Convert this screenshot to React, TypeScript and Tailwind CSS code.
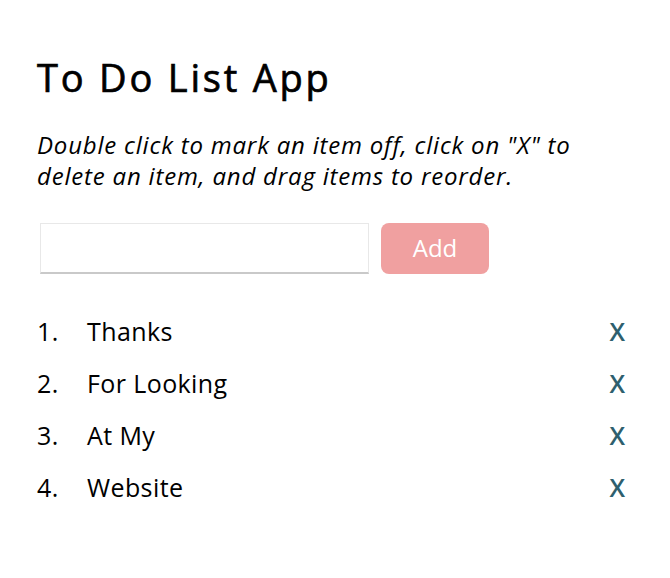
import { useState } from "react"

export default function App() {
  const [items, setItems] = useState(["Thanks", "For Looking", "At My", "Website"])
  const [text, setText] = useState("")

  const addItem = () => {
    if (!text.trim()) return
    setItems([...items, text.trim()])
    setText("")
  }

  return (
    <div className="min-h-screen bg-white px-[37px] pt-[55px] font-['Open_Sans',sans-serif] text-black">
      <h1 className="text-[38px] font-normal leading-[1.2] tracking-[2.8px] [-webkit-text-stroke:0.7px_black]">
        To Do List App
      </h1>
      <p className="mt-[28px] pr-[40px] text-[24px] italic leading-[31px] tracking-[0.8px]">
        Double click to mark an item off, click on "X" to delete an item, and drag items to reorder.
      </p>

      <div className="mt-[32px] ml-[3px] flex items-center gap-3">
        <input
          value={text}
          onChange={(e) => setText(e.target.value)}
          className="h-[51px] w-[329px] border border-[#e8e8e8] border-b-2 border-b-[#c9c9c9] px-3 text-[22px] outline-none"
        />
        <button
          onClick={addItem}
          className="h-[51px] w-[108px] rounded-lg bg-[#f0a0a0] text-[24px] text-white"
        >
          Add
        </button>
      </div>

      <ol className="mt-[32px]">
        {items.map((item, i) => (
          <li key={i} className="flex h-[52px] items-center text-[25px] tracking-[0.4px]">
            <span className="w-[50px]">{i + 1}.</span>
            <span className="flex-1">{item}</span>
            <button
              onClick={() => setItems(items.filter((_, j) => j !== i))}
              className="mr-[8px] font-semibold tracking-normal text-[#2e5f6e]"
            >
              X
            </button>
          </li>
        ))}
      </ol>
    </div>
  )
}
